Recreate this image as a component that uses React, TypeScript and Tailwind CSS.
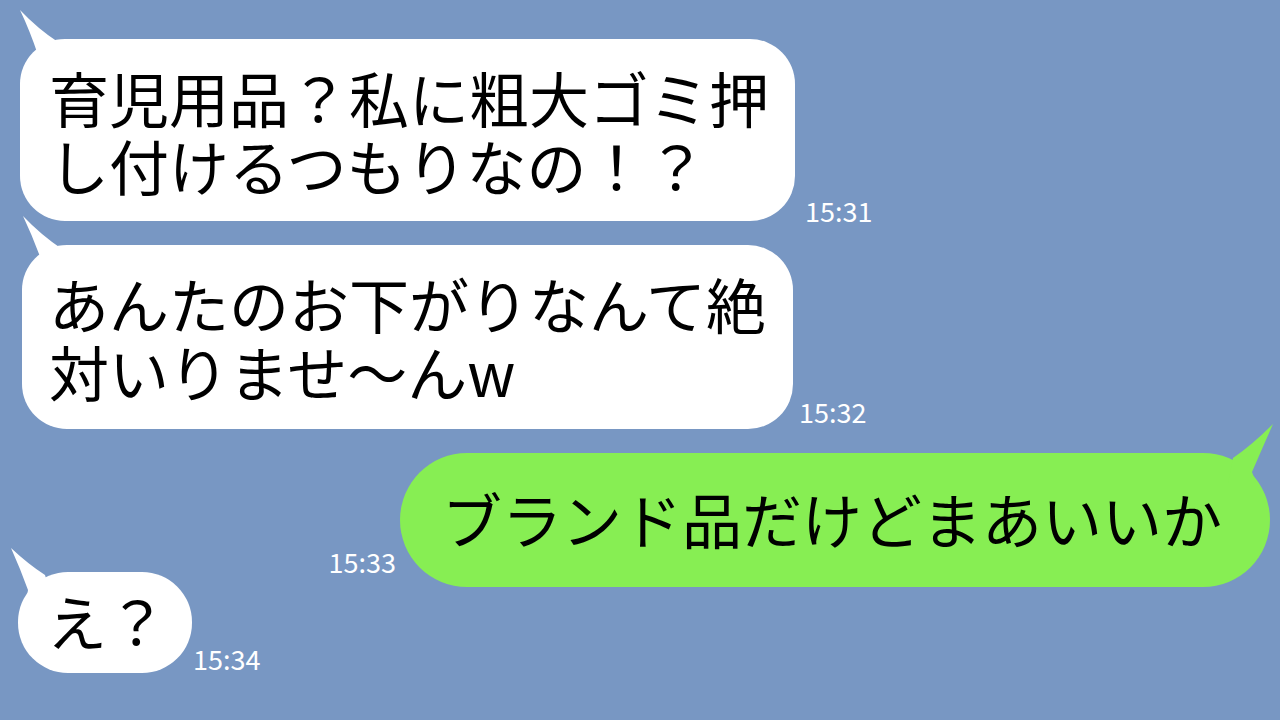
import * as React from "react";

// Speech bubble tail, drawn relative to the bubble's top edge (svg sits 30px above it)
const LeftTail = ({ d, fill = "#ffffff" }: { d: string; fill?: string }) => (
  <svg
    className="absolute left-0 -top-[30px] overflow-visible"
    width="70"
    height="70"
    viewBox="0 0 70 70"
  >
    <path d={d} fill={fill} />
  </svg>
);

const RightTail = ({ d, fill }: { d: string; fill: string }) => (
  <svg
    className="absolute right-0 -top-[30px] overflow-visible"
    width="70"
    height="70"
    viewBox="0 0 70 70"
  >
    <path d={d} fill={fill} />
  </svg>
);

const Time = ({ children, className = "" }) => (
  <span className={`text-[27px] leading-[27px] text-white ${className}`}>
    {children}
  </span>
);

export default function App() {
  return (
    <div className="w-[1280px] h-[720px] overflow-hidden bg-[#7897c3] flex flex-col font-['Noto_Sans_CJK_JP','Noto_Sans',sans-serif] text-black">
      {/* 1 */}
      <div className="flex items-end pl-[20px] mt-[39px]">
        <div className="relative bg-white rounded-[45px] pt-[24px] pb-[22px] pl-[29px] pr-[26px] text-[60px] leading-[68px] whitespace-nowrap">
          <LeftTail d="M0 1 Q18 20 38 33 L44 60 L16 60 L18 46 Q10 22 0 1 Z" />
          <span className="relative">
            育児用品？私に粗大ゴミ押
            <br />
            し付けるつもりなの！？
          </span>
        </div>
        <Time className="ml-[10px] mb-[-3px]">15:31</Time>
      </div>

      {/* 2 */}
      <div className="flex items-end pl-[22px] mt-[24px]">
        <div className="relative bg-white rounded-[45px] pt-[24px] pb-[24px] pl-[27px] pr-[27px] text-[60px] leading-[68px] whitespace-nowrap">
          <LeftTail d="M1 1 Q19 20 40 34 L46 60 L16 60 L20 47 Q11 22 1 1 Z" />
          <span className="relative">
            あんたのお下がりなんて絶
            <br />
            対いりませ〜んw
          </span>
        </div>
        <Time className="ml-[6px] mb-[4px]">15:32</Time>
      </div>

      {/* 3 (mine) */}
      <div className="flex items-end justify-end pr-[10px] mt-[24px]">
        <Time className="mr-[4px] mb-[12px]">15:33</Time>
        <div className="relative bg-[#87ee53] rounded-[67px] pt-[31px] pb-[35px] pl-[42px] pr-[48px] text-[60px] leading-[68px] whitespace-nowrap">
          <RightTail
            fill="#87ee53"
            d="M73 1 Q52 22 33 35 L28 60 L56 60 L52 49 Q62 26 73 1 Z"
          />
          <span className="relative">ブランド品だけどまあいいか</span>
        </div>
      </div>

      {/* 4 */}
      <div className="flex items-end pl-[18px] -mt-[15px]">
        <div className="relative bg-white rounded-[50px] pt-[14px] pb-[19px] pl-[29px] pr-[25px] text-[60px] leading-[68px] whitespace-nowrap">
          <LeftTail d="M-7 6 Q10 22 27 33 L35 60 L8 60 L10 48 Q2 26 -7 6 Z" />
          <span className="relative">え？</span>
        </div>
        <Time className="ml-[1px] mb-[1px]">15:34</Time>
      </div>
    </div>
  );
}
